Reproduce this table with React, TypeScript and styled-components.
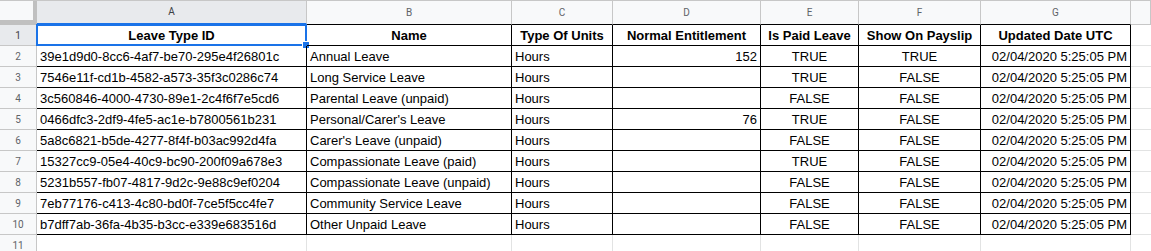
import styled, { createGlobalStyle, css } from 'styled-components'

const GlobalStyle = createGlobalStyle`
  html, body {
    margin: 0;
    padding: 0;
    background: #ffffff;
    overflow: hidden;
  }
`

type Align = 'left' | 'center' | 'right'

const columns: { letter: string; width: number; align: Align }[] = [
  { letter: 'A', width: 270, align: 'left' },
  { letter: 'B', width: 205, align: 'left' },
  { letter: 'C', width: 101, align: 'left' },
  { letter: 'D', width: 148, align: 'right' },
  { letter: 'E', width: 98, align: 'center' },
  { letter: 'F', width: 122, align: 'center' },
  { letter: 'G', width: 150, align: 'right' },
]

const headers = [
  'Leave Type ID',
  'Name',
  'Type Of Units',
  'Normal Entitlement',
  'Is Paid Leave',
  'Show On Payslip',
  'Updated Date UTC',
]

const stamp = '02/04/2020 5:25:05 PM'

const rows: string[][] = [
  ['39e1d9d0-8cc6-4af7-be70-295e4f26801c', 'Annual Leave', 'Hours', '152', 'TRUE', 'TRUE', stamp],
  ['7546e11f-cd1b-4582-a573-35f3c0286c74', 'Long Service Leave', 'Hours', '', 'TRUE', 'FALSE', stamp],
  ['3c560846-4000-4730-89e1-2c4f6f7e5cd6', 'Parental Leave (unpaid)', 'Hours', '', 'FALSE', 'FALSE', stamp],
  ['0466dfc3-2df9-4fe5-ac1e-b7800561b231', 'Personal/Carer\'s Leave', 'Hours', '76', 'TRUE', 'FALSE', stamp],
  ['5a8c6821-b5de-4277-8f4f-b03ac992d4fa', 'Carer\'s Leave (unpaid)', 'Hours', '', 'FALSE', 'FALSE', stamp],
  ['15327cc9-05e4-40c9-bc90-200f09a678e3', 'Compassionate Leave (paid)', 'Hours', '', 'TRUE', 'FALSE', stamp],
  ['5231b557-fb07-4817-9d2c-9e88c9ef0204', 'Compassionate Leave (unpaid)', 'Hours', '', 'FALSE', 'FALSE', stamp],
  ['7eb77176-c413-4c80-bd0f-7ce5f5cc4fe7', 'Community Service Leave', 'Hours', '', 'FALSE', 'FALSE', stamp],
  ['b7dff7ab-36fa-4b35-b3cc-e339e683516d', 'Other Unpaid Leave', 'Hours', '', 'FALSE', 'FALSE', stamp],
]

const Sheet = styled.div`
  display: grid;
  grid-template-columns: 37px ${columns.map((c) => `${c.width}px`).join(' ')} 1fr;
  grid-template-rows: 24px repeat(11, 21px);
  width: 1151px;
  font-family: 'Liberation Sans', Arial, sans-serif;
  border-top: 1px solid #c7c7c7;
  box-sizing: border-box;
`

const Corner = styled.div`
  background: #f8f9fa;
  border-right: 4px solid #c0c0c0;
  border-bottom: 5px solid #c0c0c0;
`

const ColHeader = styled.div<{ $selected?: boolean; $edge: string }>`
  display: flex;
  align-items: center;
  justify-content: center;
  padding-bottom: 1px;
  background: ${(p) => (p.$selected ? '#e8eaed' : '#f8f9fa')};
  border-right: 1px solid #c7c7c7;
  border-bottom: 1px solid ${(p) => p.$edge};
  font-family: Roboto, Arial, sans-serif;
  font-size: 10px;
  color: ${(p) => (p.$selected ? '#3c4043' : '#5f6368')};
  box-sizing: border-box;
  ${(p) =>
    p.$selected &&
    css`
      border-bottom: 2px solid #1a73e8;
    `}
`

const RowHeader = styled.div<{ $selected?: boolean }>`
  display: flex;
  align-items: center;
  justify-content: center;
  background: ${(p) => (p.$selected ? '#e8eaed' : '#f8f9fa')};
  border-right: 1px solid #c7c7c7;
  border-bottom: 1px solid #c7c7c7;
  font-family: Roboto, Arial, sans-serif;
  font-size: 10px;
  color: ${(p) => (p.$selected ? '#3c4043' : '#5f6368')};
  box-sizing: border-box;
`

const Cell = styled.div<{ $align: Align; $bold?: boolean; $line: string }>`
  position: relative;
  display: flex;
  align-items: flex-end;
  justify-content: ${(p) =>
    p.$align === 'left' ? 'flex-start' : p.$align === 'right' ? 'flex-end' : 'center'};
  padding: 0 3px 2px;
  border-right: 1px solid ${(p) => p.$line};
  border-bottom: 1px solid ${(p) => p.$line};
  font-size: 13px;
  line-height: 15px;
  font-weight: ${(p) => (p.$bold ? 700 : 400)};
  color: #000000;
  white-space: nowrap;
  overflow: visible;
  box-sizing: border-box;
`

const Spare = styled.div`
  border-bottom: 1px solid #e2e3e3;
  box-sizing: border-box;
`

const Selection = styled.div`
  position: absolute;
  left: -1px;
  top: -1px;
  right: -1px;
  bottom: -1px;
  border: 2px solid #1a73e8;
  pointer-events: none;
`

const Handle = styled.div`
  position: absolute;
  right: -5px;
  bottom: -5px;
  width: 6px;
  height: 6px;
  background: #1a73e8;
  border: 1px solid #ffffff;
`

const App = () => {
  const body = [headers, ...rows]

  return (
    <>
      <GlobalStyle />
      <Sheet>
        <Corner />
        {columns.map((c, i) => (
          <ColHeader key={c.letter} $selected={i === 0} $edge="#000000">
            {c.letter}
          </ColHeader>
        ))}
        <ColHeader $edge="#c7c7c7" />

        {body.map((row, r) => (
          <Row key={r} index={r + 1} values={row} />
        ))}

        <RowHeader>11</RowHeader>
        {columns.map((c) => (
          <Cell key={c.letter} $align="left" $line="#e2e3e3" />
        ))}
        <Spare />
      </Sheet>
    </>
  )
}

const Row = ({ index, values }: { index: number; values: string[] }) => {
  const isHead = index === 1
  return (
    <>
      <RowHeader $selected={isHead}>{index}</RowHeader>
      {values.map((v, c) => (
        <Cell
          key={c}
          $align={isHead ? 'center' : columns[c].align}
          $bold={isHead}
          $line="#000000"
        >
          {v}
          {isHead && c === 0 && (
            <Selection>
              <Handle />
            </Selection>
          )}
        </Cell>
      ))}
      <Spare />
    </>
  )
}

export default App
